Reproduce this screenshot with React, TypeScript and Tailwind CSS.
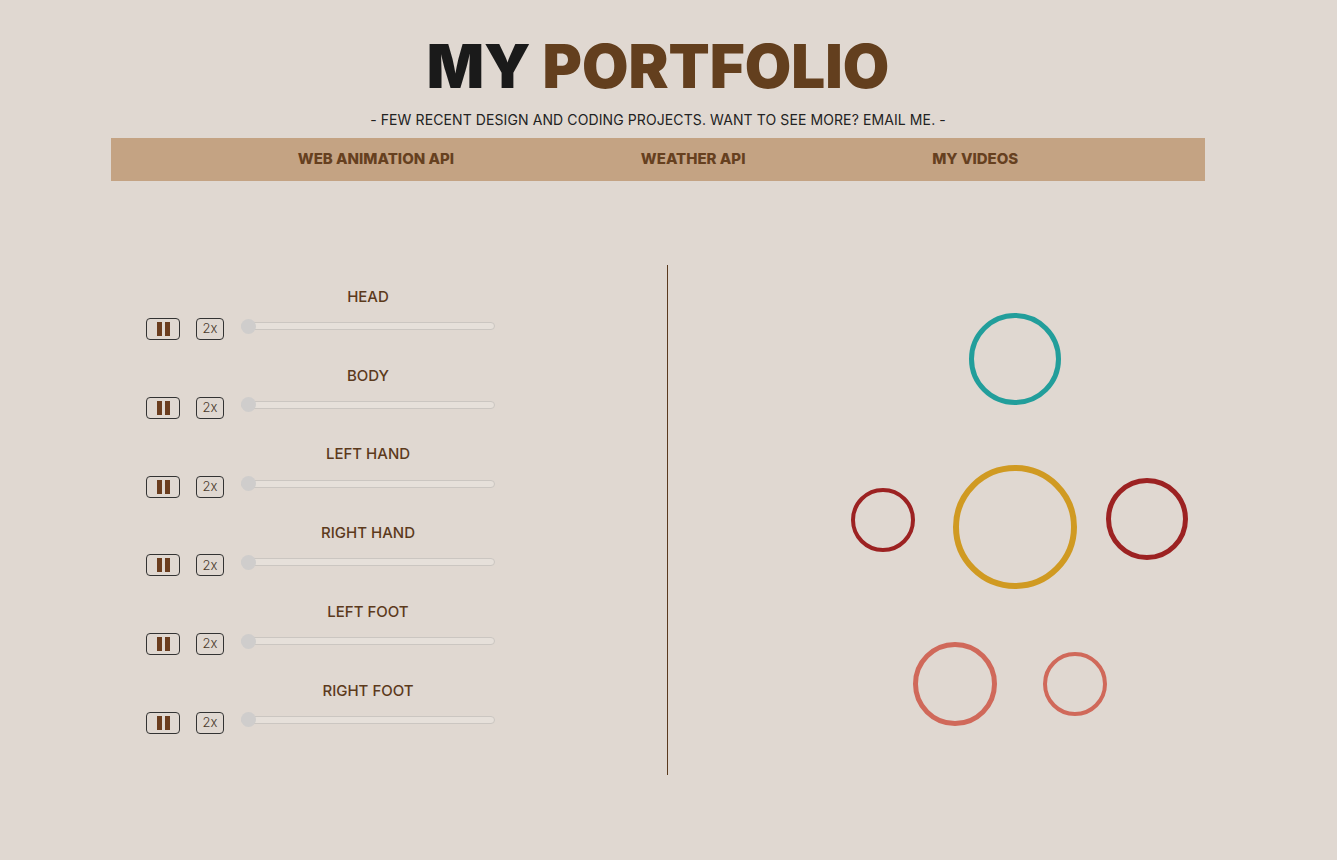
import React from "react";

const parts = ["HEAD", "BODY", "LEFT HAND", "RIGHT HAND", "LEFT FOOT", "RIGHT FOOT"];

function PartControl({ label }: { label: string }) {
  return (
    <div className="flex flex-col gap-[10px]">
      <div className="ml-[95px] w-[254px] h-[22px] flex items-center justify-center text-[15px] font-medium text-[#5c3a1c]">
        {label}
      </div>
      <div className="flex items-center h-[22px]">
        <button className="w-[34px] h-[22px] border border-[#333] rounded-[4px] flex items-center justify-center gap-[3px]">
          <span className="block w-[5px] h-[14px] bg-[#6b3d1e]" />
          <span className="block w-[5px] h-[14px] bg-[#6b3d1e]" />
        </button>
        <button className="ml-[16px] w-[28px] h-[22px] border border-[#333] rounded-[4px] flex items-center justify-center text-[13px] font-light text-[#4a3a2c]">
          2x
        </button>
        <div className="ml-[17px] relative w-[254px] h-[15px] -mt-[6px] flex items-center">
          <div className="w-full h-[8px] rounded-full border border-[#cbc6c1] bg-[#e6e0da]" />
          <div className="absolute left-0 top-0 w-[15px] h-[15px] rounded-full bg-[#cfcdcc]" />
        </div>
      </div>
    </div>
  );
}

export default function App() {
  return (
    <div className="min-h-screen w-full bg-[#e0d8d1] font-['Inter',sans-serif]">
      <div className="w-[1316px] pb-[84px]">
        <header className="pt-[32px] flex flex-col items-center">
          <h1 className="text-[60px] leading-[69px] font-black">
            <span className="text-[#1a1a1a]">MY </span>
            <span className="text-[#633f1e]">PORTFOLIO</span>
          </h1>
          <p className="mt-[9px] text-[14px] leading-[20px] tracking-[0.1px] text-[#222]">
            - FEW RECENT DESIGN AND CODING PROJECTS. WANT TO SEE MORE? EMAIL ME. -
          </p>
        </header>

        <nav className="mx-[111px] mt-[8px] h-[43px] bg-[#c4a383] flex items-center justify-evenly">
          <a href="#" className="text-[15px] font-extrabold text-[#66401f]">WEB ANIMATION API</a>
          <a href="#" className="text-[15px] font-extrabold text-[#66401f]">WEATHER API</a>
          <a href="#" className="text-[15px] font-extrabold text-[#66401f]">MY VIDEOS</a>
        </nav>

        <main className="mt-[84px] ml-[111px] flex h-[510px]">
          <section className="w-[556px] pl-[35px] pt-[21px] flex flex-col gap-[24.8px]">
            {parts.map((p) => (
              <PartControl key={p} label={p} />
            ))}
          </section>
          <div className="w-px bg-[#5a3a1e]" />
          <section className="relative w-[537px]">
            <div className="absolute left-[301px] top-[48px] w-[92px] h-[92px] rounded-full border-[5px] border-[#229e9b]" />
            <div className="absolute left-[183px] top-[223px] w-[64px] h-[64px] rounded-full border-[4px] border-[#9c2222]" />
            <div className="absolute left-[285px] top-[200px] w-[124px] h-[124px] rounded-full border-[6px] border-[#d09a22]" />
            <div className="absolute left-[438px] top-[213px] w-[82px] h-[82px] rounded-full border-[5px] border-[#9c2222]" />
            <div className="absolute left-[245px] top-[377px] w-[84px] h-[84px] rounded-full border-[5px] border-[#d0695a]" />
            <div className="absolute left-[375px] top-[387px] w-[64px] h-[64px] rounded-full border-[4px] border-[#d0695a]" />
          </section>
        </main>
      </div>
    </div>
  );
}
